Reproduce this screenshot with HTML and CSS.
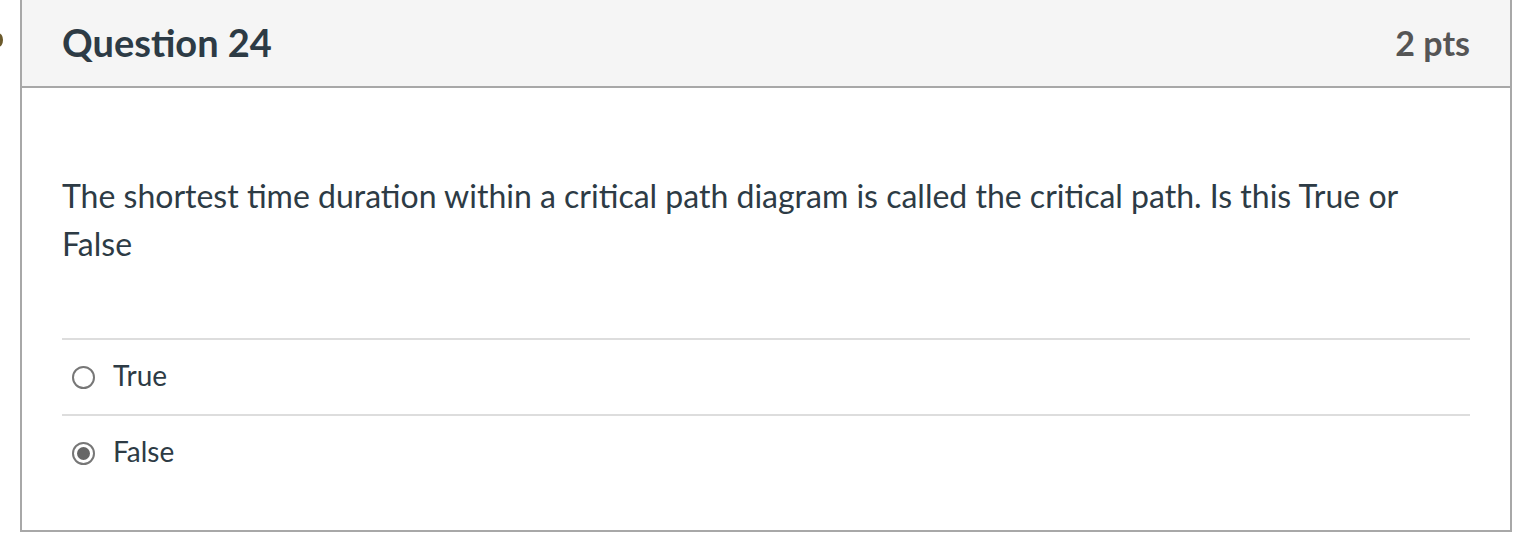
FILE: index.html
```html
<!DOCTYPE html>
<html>
<head>
<meta charset="utf-8">
<link rel="stylesheet" href="styles.css">
</head>
<body>
<div class="page">
  <span class="flag"></span>
  <div class="question">
    <div class="q-header">
      <h2 class="q-title">Question 24</h2>
      <div class="q-pts">2 pts</div>
    </div>
    <div class="q-body">
      <p class="q-text">The shortest time duration within a critical path diagram is called the critical path. Is this True or False</p>
      <div class="answers">
        <label class="answer">
          <span class="radio"></span>
          <span class="answer-label">True</span>
        </label>
        <label class="answer">
          <span class="radio checked"></span>
          <span class="answer-label">False</span>
        </label>
      </div>
    </div>
  </div>
</div>
</body>
</html>
```

FILE: styles.css
```css
html, body {
  margin: 0;
  padding: 0;
  background: #ffffff;
}

body {
  font-family: Lato, "Noto Sans", sans-serif;
  color: #2d3b45;
}

.page {
  position: relative;
  padding-left: 20px;
  width: 1492px;
}

.flag {
  position: absolute;
  left: -6px;
  top: 33px;
  width: 9px;
  height: 14px;
  border-radius: 50%;
  background: #6b5a2c;
}

.question {
  border: 2px solid #a8a8a8;
  border-top: none;
  height: 532px;
  box-sizing: border-box;
}

.q-header {
  height: 84px;
  padding: 0 40px 2px;
  background: #f5f5f5;
  border-bottom: 2px solid #a8a8a8;
  display: flex;
  align-items: center;
  justify-content: space-between;
}

.q-title {
  margin: 0;
  font-size: 38px;
  font-weight: 700;
  color: #2d3b45;
}

.q-pts {
  font-size: 34px;
  font-weight: 700;
  color: #555555;
}

.q-body {
  padding: 0 40px;
}

.q-text {
  margin: 0;
  padding-top: 84px;
  padding-bottom: 70px;
  font-size: 32px;
  line-height: 48px;
  border-bottom: 2px solid #dddddd;
}

.answers {
  display: flex;
  flex-direction: column;
}

.answer {
  display: flex;
  align-items: center;
  height: 74px;
  border-bottom: 2px solid #dddddd;
  font-size: 28px;
}

.answer:last-child {
  border-bottom: none;
}

.radio {
  width: 23px;
  height: 23px;
  border: 2px solid #777777;
  border-radius: 50%;
  box-sizing: border-box;
  margin-left: 10px;
  margin-right: 18px;
  display: flex;
  align-items: center;
  justify-content: center;
}

.radio.checked::after {
  content: "";
  width: 13px;
  height: 13px;
  border-radius: 50%;
  background: #666666;
}

.answer-label {
  color: #2d3b45;
  padding-bottom: 5px;
}
```
